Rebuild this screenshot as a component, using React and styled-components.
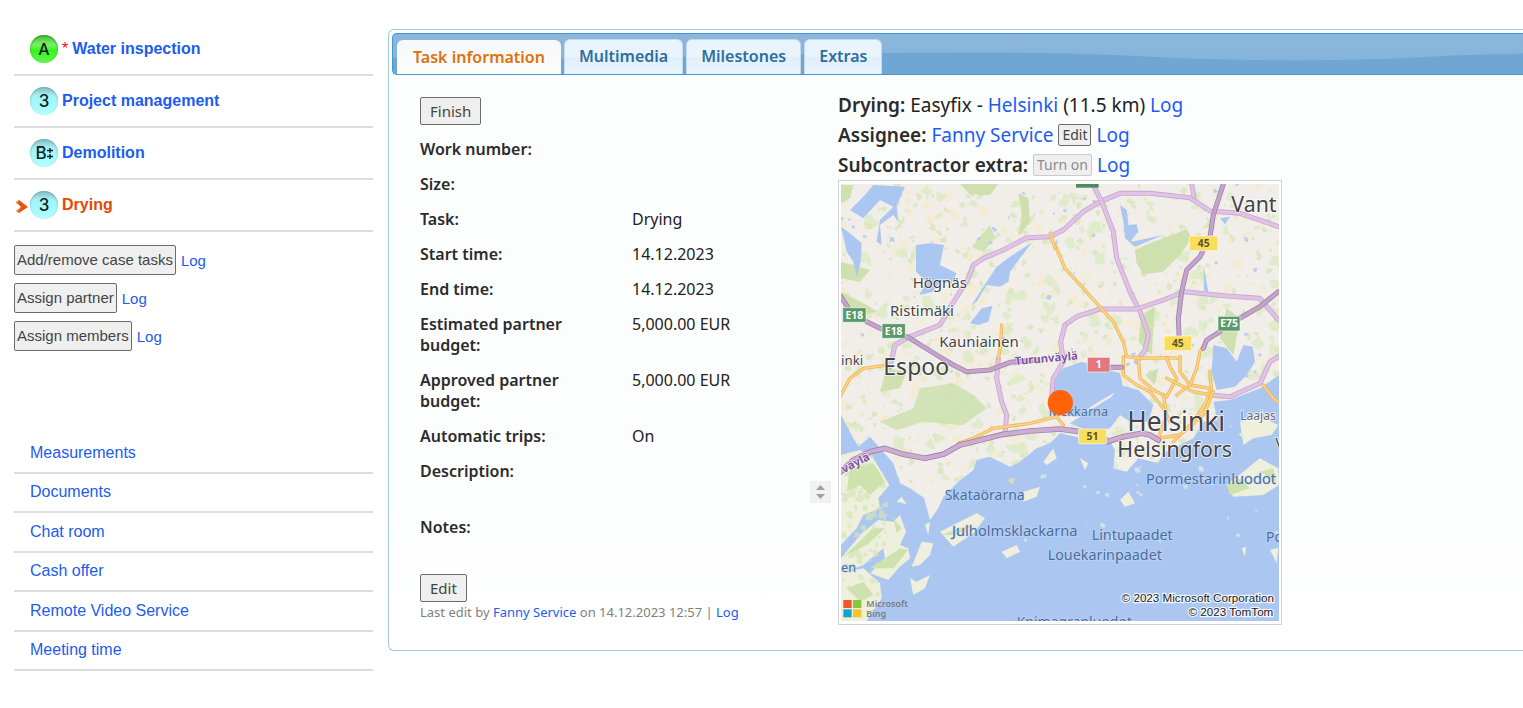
import React from "react";
import styled, { createGlobalStyle, css } from "styled-components";

const sans = '"Liberation Sans", Arial, sans-serif';
const humanist = '"Noto Sans", "Lucida Sans", sans-serif';

const GlobalStyle = createGlobalStyle`
  * { box-sizing: border-box; }
  body {
    margin: 0;
    background: #fff;
    color: #222;
    font-family: ${sans};
    font-size: 16px;
    overflow-x: hidden;
  }
  a { color: #1c5cf0; text-decoration: none; }
  a:hover { text-decoration: underline; }
`;

const Page = styled.div`
  display: flex;
  align-items: flex-start;
  gap: 15px;
  padding: 24px 0 32px 14px;
`;

/* ---------- sidebar ---------- */

const Sidebar = styled.aside`
  flex: 0 0 359px;
`;

const PlainList = styled.ul`
  list-style: none;
  margin: 0;
  padding: 0;
`;

const TaskRow = styled.li`
  display: flex;
  align-items: center;
  height: 52px;
  border-bottom: 2px solid #dcdcdc;
`;

const MarkerSlot = styled.span`
  display: flex;
  flex: 0 0 16px;
  padding: 3px 0 0 1px;
`;

const Badge = styled.span`
  display: flex;
  align-items: center;
  justify-content: center;
  flex: 0 0 28px;
  height: 28px;
  margin-right: 4px;
  border-radius: 50%;
  font: 500 17px/28px Inter, ${sans};
  color: #10221f;
  ${(p) =>
    p.$tone === "green"
      ? css`
          background: linear-gradient(#46bb35 0, #7af268 35%, #35f51c 55%, #62f54c 100%);
          box-shadow: inset 0 1px 2px #329b26;
          font-size: 16px;
        `
      : css`
          background: linear-gradient(#83bdc2 0, #a5eff3 30%, #a1fbff 60%, #b4feff 100%);
          box-shadow: inset 0 1px 2px #78acb0;
        `}
`;

const TaskLink = styled.a`
  font-weight: bold;
  line-height: 20px;
  &[aria-current] { color: #e24a00; }
`;

const Required = styled.span`
  margin-right: 4px;
  color: #f00;
`;

const Actions = styled.div`
  display: flex;
  flex-direction: column;
  gap: 8px;
  padding-top: 13px;
`;

const ActionRow = styled.div`
  display: flex;
  align-items: center;
  gap: 5px;
  font-size: 15px;
`;

const Button = styled.button`
  font-family: ${humanist};
  font-size: 15px;
  line-height: 20px;
  padding: 3px 9px;
  color: #444;
  background: #efefef;
  border: 1px solid #6b6b6b;
  border-radius: 2px;
  &:disabled { color: #8c8c8c; border-color: #cacaca; }
`;

const SideButton = styled(Button)`
  font-family: ${sans};
  height: 30px;
  padding: 0 2px;
`;

const InlineButton = styled(Button)`
  font-size: 14px;
  line-height: 20px;
  padding: 0 3px;
`;

const Menu = styled(PlainList)`
  display: grid;
  grid-auto-rows: 1fr;
  min-height: 237px;
  margin-top: 83px;
`;

const MenuItem = styled.li`
  display: flex;
  align-items: center;
  padding-left: 16px;
  border-bottom: 2px solid #dcdcdc;
`;

/* ---------- tabbed panel ---------- */

const Panel = styled.main`
  flex: 1;
  min-width: 900px;
  margin-top: 5px;
  padding: 3px 0 0 3px;
  border: 1px solid #a6c9e2;
  border-right: 0;
  border-radius: 6px 0 0 6px;
  background: linear-gradient(#fcfdfd 60%, #fff);
  font-family: ${humanist};
`;

const TabBar = styled.div`
  position: relative;
  display: flex;
  align-items: flex-end;
  gap: 3px;
  height: 42px;
  padding-left: 4px;
  overflow: hidden;
  border: 1px solid #4297d7;
  border-right: 0;
  border-radius: 5px 0 0 5px;
  background: linear-gradient(#8bb7dc, #84b2d6);
`;

const Wave = styled.svg`
  position: absolute;
  top: 0;
  left: 0;
`;

const Tab = styled.button`
  position: relative;
  height: 35px;
  padding: 0 14px 2px;
  font: 600 16px/30px ${humanist};
  color: #2e6e9e;
  border: 1px solid #c5dbec;
  border-bottom: 0;
  border-radius: 6px 6px 0 0;
  background: linear-gradient(#eaf4fd 50%, #dfeffc 50%, #eaf4fe);
  &[aria-selected="true"] {
    height: 34px;
    padding: 0 15px 2px;
    color: #e17009;
    border-color: #f7fafb;
    background: linear-gradient(#f5f8f9, #fcfdfd);
  }
`;

const Content = styled.div`
  display: flex;
  gap: 7px;
  padding: 15px 0 25px 28px;
`;

const Details = styled.section`
  flex: 0 0 411px;
  padding-top: 7px;
`;

const Facts = styled.table`
  width: 100%;
  table-layout: fixed;
  border-collapse: collapse;
  margin: 7px 0 8px;
  font-size: 16px;
  line-height: 21px;
`;

const Fact = styled.tr`
  vertical-align: top;
  height: ${(p) => (p.$tall ? 56 : 35)}px;
  th, td { padding: 7px 0; text-align: left; }
  th { width: 212px; padding-right: 60px; font-weight: 600; color: #2b2b2b; }
`;

const TextBox = styled.div`
  display: flex;
  align-items: flex-end;
  height: 42px;
`;

const TextArea = styled.textarea`
  flex: 1;
  height: 22px;
  min-width: 0;
  padding: 0;
  border: 0;
  background: transparent;
  resize: none;
  overflow: hidden;
  font: inherit;
`;

const Scroller = styled.span`
  display: flex;
  flex-direction: column;
  align-items: center;
  justify-content: center;
  width: 21px;
  height: 22px;
  background: #f1f1f1;
`;

const Footnote = styled.p`
  margin: 0;
  font-size: 13px;
  line-height: 20px;
  color: #808080;
`;

const Location = styled.section`
  font-size: 19px;
`;

const Line = styled.div`
  display: flex;
  align-items: center;
  gap: 5px;
  height: 30px;
  white-space: nowrap;
  b { font-weight: 600; color: #2b2b2b; }
`;

const MapFrame = styled.figure`
  margin: 0;
  width: 444px;
  padding: 3px 2px;
  border: 1px solid #d5d5d5;
  background: #fff;
  svg { display: block; width: 100%; height: auto; }
`;

/* ---------- data ---------- */

const tasks = [
  { name: "Water inspection", badge: "A", tone: "green", required: true },
  { name: "Project management", badge: "3" },
  { name: "Demolition", badge: "B" },
  { name: "Drying", badge: "3", current: true },
];

const actions = ["Add/remove case tasks", "Assign partner", "Assign members"];

const menu = ["Measurements", "Documents", "Chat room", "Cash offer", "Remote Video Service", "Meeting time"];

const facts = [
  ["Work number:", ""],
  ["Size:", ""],
  ["Task:", "Drying"],
  ["Start time:", "14.12.2023"],
  ["End time:", "14.12.2023"],
  ["Estimated partner budget:", "5,000.00 EUR"],
  ["Approved partner budget:", "5,000.00 EUR"],
  ["Automatic trips:", "On"],
];

/* ---------- drawings ---------- */

const Marker = () => (
  <svg width="13" height="15" viewBox="0 0 13 15" aria-hidden="true">
    <path d="M1 3l3-2 9 7-9 6-3-2 5-4z" fill="#e85510" />
    <path d="M1 5l2-3M2 13l3-4" stroke="#f79a6c" fill="none" />
  </svg>
);

const DoublePlus = () => (
  <svg width="6" height="13" viewBox="0 0 6 13" aria-hidden="true">
    <path d="M3 1v5M0 3.5h6M3 7v5M0 9.5h6" stroke="#10221f" strokeWidth="1.4" />
  </svg>
);

const Arrow = ({ up }) => (
  <svg width="11" height="8" viewBox="0 0 11 8" aria-hidden="true">
    <path d={up ? "M1 6h9L5.500 1z" : "M1 2h9L5.500 7z"} fill="#a0a0a0" />
  </svg>
);

function blobs(seed, count, box, size) {
  let s = seed;
  const rnd = () => (s = (s * 16807) % 2147483647) / 2147483647;
  let d = "";
  for (let i = 0; i < count; i++) {
    const x = box[0] + rnd() * box[2];
    const y = box[1] + rnd() * box[3];
    const r = size * (0.3 + rnd());
    for (let k = 0; k < 8; k++) {
      const a = (k / 8) * Math.PI * 2;
      const q = r * (0.35 + rnd() * 0.9);
      d += `${k ? "L" : "M"}${Math.round(x + Math.cos(a) * q)} ${Math.round(y + Math.sin(a) * q)}`;
    }
    d += "Z";
  }
  return d;
}

const greens = blobs(77, 260, [33, 27, 1314, 900], 19);
const smallGreens = blobs(5150, 520, [33, 27, 1314, 900], 9);
const creams = blobs(991, 420, [33, 27, 1314, 900], 14);
const ponds = blobs(313, 60, [33, 27, 1314, 600], 7);
const islets = blobs(4242, 30, [560, 840, 790, 260], 9);
const coastGreens = blobs(808, 90, [40, 840, 130, 420], 11);

const Road = ({ d, edge, fill, w }) => (
  <g fill="none" strokeLinejoin="round" strokeLinecap="round">
    <path d={d} stroke={edge} strokeWidth={w} />
    <path d={d} stroke={fill} strokeWidth={w - 5} />
  </g>
);

const minorRoads = [
  "M675 210L705 280L760 340L815 402L850 440L880 500L890 545L930 550L1010 548L1050 550",
  "M660 175L675 220M515 450L512 510L505 550",
  "M33 660L60 610L100 580L160 572",
  "M880 545L880 600L920 630L960 650L1000 700L1020 740",
  "M925 545L930 610L970 645L1010 665L1040 610L1020 575L1010 548",
  "M1050 545L1050 590L1080 630L1140 640L1130 680L1090 740L1030 800",
  "M1040 660L1080 630L1100 580L1110 530L1130 495",
  "M1140 590L1145 660L1090 650L1010 610",
  "M1000 660L1010 720L985 790L1050 780L1120 720L1150 650",
  "M385 805L430 790L490 760L600 745L680 725L700 750",
  "M1300 630L1330 670L1345 680",
];
const motorways = [
  "M235 487L330 450L365 390L415 310L430 270L460 250L520 225L590 188L660 185L700 165L760 110L810 80L870 55L960 55L1080 68L1140 108L1230 115L1345 155",
  "M788 27L815 80L850 170L860 250L900 350L930 410L955 480L945 525L920 560",
  "M235 487L195 510L180 575",
  "M1085 27L1092 65",
  "M705 450L740 425L810 402L920 402L1000 375L1065 350L1190 363L1290 370L1345 435",
  "M705 450L692 500L700 560L670 610L665 660M505 550L500 610L515 680L530 720L525 775",
  "M1140 660L1200 665L1290 625L1320 560L1345 545",
];
const highways = [
  "M110 440L150 460L235 487L320 540L370 570L410 590L480 585L540 562L620 555M830 577H875",
  "M1180 27L1150 120L1140 185L1110 245L1070 285L1055 350L1045 430L1048 500",
  "M1345 350L1290 395L1220 435M1170 470L1130 495L1120 520",
  "M33 365L52 395",
];

const labels = [
  [248, 340, 45, "Högnäs"], [180, 423, 45, "Ristimäki"], [328, 515, 45, "Kauniainen"],
  [160, 600, 69, "Espoo"], [33, 570, 40, "inki"], [1204, 112, 64, "Vant"],
];
const bigLabels = [[892, 768, 79, "Helsinki"], [862, 846, 64, "Helsingfors"]];
const seaLabels = [
  [344, 975, 42, "Skataörarna"], [366, 1083, 44, "Julholmsklackarna"], [785, 1094, 43, "Lintupaadet"],
  [653, 1155, 43, "Louekarinpaadet"], [948, 927, 44, "Pormestarinluodot"], [1308, 1102, 42, "Po"],
  [560, 1356, 42, "Knimagrapluodot"], [33, 1190, 38, "en"],
];

const Sign = ({ x, y, w, fill, color, children }) => (
  <g>
    <rect x={x} y={y} width={w} height="44" rx="2" fill={fill} stroke="#fff" strokeOpacity=".6" strokeWidth="3" />
    <text x={x + w / 2} y={y + 33} textAnchor="middle" fontSize="31" fontWeight="700" fill={color}>
      {children}
    </text>
  </g>
);

const CityMap = () => (
  <svg viewBox="33 27 1314 1311" role="img" aria-label="Map of Espoo and Helsinki" fontFamily='"Noto Sans", sans-serif'>
    <rect x="33" y="27" width="1314" height="1311" fill="#f1eeea" />
    <path d={creams} fill="#f4ebd5" />
    <path d={greens} fill="#dfebca" />
    <path d={smallGreens} fill="#dbe8c2" />
    <g fill="#cde0ae">
      <path d="M915 225L960 205L1070 163L1085 190L1050 240L1000 290L940 298L920 265Z" />
      <path d="M390 27H505L480 60L420 58ZM565 55L595 70L600 140L565 185L575 120ZM33 30L70 30L60 70L33 85Z" />
      <path d="M270 640L370 625L430 660L470 700L400 750L280 740L200 765L150 740L250 700ZM480 150L495 190L460 230L425 215Z" opacity=".85" />
      <path d="M935 420L975 395L965 540L925 500ZM945 600L985 580L975 630ZM1190 400L1230 430L1210 540L1170 490ZM33 260L120 285L90 320L33 310Z" />
      <path d="M170 580L230 590L210 640L150 650ZM33 350L110 390L140 410L60 430Z" />
    </g>
    <g fill="#abc7f1">
      <path d={ponds} opacity=".8" />
      <path d="M258 210L300 205L342 210L330 270L380 295L365 325L330 320L310 350L268 360L290 320L258 290Z" />
      <path d="M605 203L570 250L540 290L535 320L510 335L470 330L440 380L425 390L470 320L500 275L540 245Z" />
      <path d="M455 400L488 392L475 440L445 450L420 445ZM33 155L60 175L95 205L92 260L80 305L70 260L50 230ZM130 30L225 35L200 90L205 140L190 120L150 150L155 210L140 200L150 135L190 95L150 75L100 130L60 105L105 60Z" />
      <path d="M895 150L920 148L925 170L905 195L893 180ZM1170 130L1200 125L1185 148ZM870 90L890 105L895 145L905 200L1000 180L915 215L885 190L880 140Z" />
      <path d="M1150 510L1190 520L1220 560L1240 510L1268 515L1275 560L1250 600L1215 635L1160 645L1145 590ZM1120 270L1135 350L1122 345Z" />
      <path d="M675 610L700 580L755 560L820 580L870 595L880 640L850 655L790 690L740 725L700 720L660 700Z" />
      <path d="M870 630L925 645L970 690L955 740L900 740L870 720L840 760L780 770L720 745L790 700L845 665ZM1150 680L1200 675L1290 640L1347 600V760L1290 750L1220 780L1200 750L1175 760L1160 725Z" />
      <path d="M33 720L62 775L85 815L120 785L150 820L190 865L210 925L240 940L282 968L300 1035L325 1000L340 965L385 920L430 885L440 855L480 845L540 875L570 860L620 820L660 805L690 775L760 790L830 780L855 825L850 880L890 890L925 850L985 865L1000 835L1090 790L1120 740L1180 735L1240 790L1270 760L1347 750V1338H33Z" />
    </g>
    <g fill="#eef0dd">
      <path d="M33 840L90 825L130 850L178 930L145 970L150 1000L100 1020L80 1060L33 1110ZM95 1075L145 1035L190 1040L210 1020L228 1070L210 1110L235 1120L240 1150L205 1180L175 1215L120 1195L165 1150L160 1120L100 1170L33 1195V1150ZM33 1195L100 1180L150 1225L155 1270L110 1338H33Z" />
      <path d="M275 1100L310 1105L300 1140L270 1170L245 1175ZM240 1210L260 1220L300 1200L285 1240L250 1260ZM330 1070L380 1045L440 1015L465 1030L430 1075L370 1115ZM515 1130L560 1110L570 1130L530 1150ZM580 950L630 935L620 965L580 980ZM200 980L215 965L230 988ZM870 975L895 950L915 985L885 995ZM1320 1125L1345 1118L1340 1165ZM1190 930L1290 850L1345 880L1347 930L1300 960L1210 965ZM1230 740L1290 725L1345 750L1325 780L1270 790L1240 810ZM750 850L775 865L765 885Z" />
      <path d={islets} opacity=".6" />
      <path d="M640 860L670 820L680 850L650 870ZM285 1050L300 1040L295 1080ZM1235 1120L1248 1115L1245 1145Z" />
    </g>
    <path d={coastGreens} fill="#d3e4b6" opacity=".7" />
    <g fill="#cfe2ae">
      <path d="M60 880L130 865L165 920L120 960L90 930L50 950ZM120 1180L210 1120L235 1125L190 1180ZM40 1145L130 1060L165 1060L110 1110ZM50 1240L100 1220L130 1260L90 1280ZM190 1030L215 1060L200 1075ZM335 1080L400 1055L430 1050L380 1080ZM1190 930L1230 910L1260 940L1200 960ZM530 915L555 908L548 930ZM1290 890L1330 880L1340 920Z" />
    </g>
    {motorways.map((d) => <Road key={d} d={d} edge="#c8a6d1" fill="#dfc3e4" w={15} />)}
    {minorRoads.map((d) => <Road key={d} d={d} edge="#f0b35e" fill="#fbd780" w={10} />)}
    {highways.map((d) => <Road key={d} d={d} edge="#a283b0" fill="#c4a4c8" w={15} />)}
    <Road d="M33 890L70 855L120 830L165 820L220 838L285 850L340 838L390 810L520 778L600 768L690 762L750 770L830 800L880 785L935 775L960 780L985 795" edge="#a17eb0" fill="#cbadcf" w={17} />
    <g fill="#8053a0" fontSize="34" fontWeight="700" stroke="#fff" strokeOpacity=".7" strokeWidth="4" paintOrder="stroke">
      <text transform="translate(556 570) rotate(-5)">Turunväylä</text>
      <text transform="translate(42 895) rotate(-28)">väylä</text>
    </g>
    <g fill="#454348" stroke="#fff" strokeWidth="5" strokeOpacity=".8" paintOrder="stroke">
      {[...labels, ...bigLabels].map(([x, y, size, t]) => <text key={t} x={x} y={y} fontSize={size}>{t}</text>)}
      <text x="1231" y="736" fontSize="36" fill="#6a6a72">Laajas</text>
      <text x="1336" y="818" fontSize="44">V</text>
    </g>
    <g fill="#496d9c" stroke="#c8daf6" strokeWidth="4" strokeOpacity=".7" paintOrder="stroke">
      {seaLabels.map(([x, y, size, t]) => <text key={t} x={x} y={y} fontSize={size}>{t}</text>)}
      <text x="656" y="723" fontSize="38">Mekkarna</text>
    </g>
    <Sign x={38} y={398} w={70} fill="#5a9a68" color="#fff">E18</Sign>
    <Sign x={156} y={446} w={70} fill="#5a9a68" color="#fff">E18</Sign>
    <Sign x={1164} y={424} w={66} fill="#5a9a68" color="#fff">E75</Sign>
    <rect x="738" y="20" width="68" height="18" fill="#4d8a5c" />
    <Sign x={1078} y={183} w={86} fill="#f9dd5b" color="#5d522b">45</Sign>
    <Sign x={1002} y={483} w={83} fill="#f9dd5b" color="#5d522b">45</Sign>
    <Sign x={746} y={762} w={83} fill="#f9dd5b" color="#5d522b">51</Sign>
    <Sign x={772} y={547} w={68} fill="#e4767d" color="#fff">1</Sign>
    <circle cx="691" cy="683" r="38" fill="#ff6309" />
    <rect x="40" y="1275" width="25" height="24" fill="#f1592a" />
    <rect x="69" y="1275" width="25" height="24" fill="#8bc43f" />
    <rect x="40" y="1303" width="25" height="24" fill="#18a3c8" />
    <rect x="69" y="1303" width="25" height="24" fill="#f7c430" />
    <g fontSize="27" fontWeight="600" fill="#7b7c80">
      <text x="109" y="1297">Microsoft</text>
      <text x="109" y="1327">Bing</text>
    </g>
    <g fontFamily='"Liberation Sans", sans-serif' fontSize="35" textAnchor="end" fill="#222" stroke="#fff" strokeWidth="7" strokeOpacity=".85" paintOrder="stroke">
      <text x="1332" y="1282">© 2023 Microsoft Corporation</text>
      <text x="1330" y="1323">© 2023 TomTom</text>
    </g>
  </svg>
);

/* ---------- page ---------- */

export default function App() {
  return (
    <>
      <GlobalStyle />
      <Page>
        <Sidebar>
          <PlainList>
            {tasks.map((t) => (
              <TaskRow key={t.name}>
                <MarkerSlot>{t.current && <Marker />}</MarkerSlot>
                <Badge $tone={t.tone}>
                  {t.badge}
                  {t.badge === "B" && <DoublePlus />}
                </Badge>
                {t.required && <Required>*</Required>}
                <TaskLink href="#" aria-current={t.current ? "page" : undefined}>{t.name}</TaskLink>
              </TaskRow>
            ))}
          </PlainList>
          <Actions>
            {actions.map((a) => (
              <ActionRow key={a}>
                <SideButton type="button">{a}</SideButton>
                <a href="#">Log</a>
              </ActionRow>
            ))}
          </Actions>
          <Menu>
            {menu.map((m) => (
              <MenuItem key={m}><a href="#">{m}</a></MenuItem>
            ))}
          </Menu>
        </Sidebar>

        <Panel>
          <TabBar role="tablist">
            <Wave width="2000" height="42" viewBox="0 0 2000 42" aria-hidden="true">
              <path d="M0 24C150 28 300 22 430 20C580 18 640 18 720 21C850 28 950 28 1050 22C1130 19 1180 18 1250 20C1400 28 1600 28 2000 20V42H0Z" fill="#6fa6d3" />
            </Wave>
            <Tab type="button" role="tab" aria-selected="true">Task information</Tab>
            <Tab type="button" role="tab" aria-selected="false">Multimedia</Tab>
            <Tab type="button" role="tab" aria-selected="false">Milestones</Tab>
            <Tab type="button" role="tab" aria-selected="false">Extras</Tab>
          </TabBar>

          <Content role="tabpanel">
            <Details>
              <Button type="button">Finish</Button>
              <Facts>
                <tbody>
                  {facts.map(([label, value]) => (
                    <Fact key={label}>
                      <th scope="row">{label}</th>
                      <td>{value}</td>
                    </Fact>
                  ))}
                  <Fact $tall>
                    <th scope="row"><label htmlFor="description">Description:</label></th>
                    <td>
                      <TextBox>
                        <TextArea id="description" readOnly />
                        <Scroller aria-hidden="true"><Arrow up /><Arrow /></Scroller>
                      </TextBox>
                    </td>
                  </Fact>
                  <Fact $tall>
                    <th scope="row">Notes:</th>
                    <td />
                  </Fact>
                </tbody>
              </Facts>
              <Button type="button">Edit</Button>
              <Footnote>
                Last edit by <a href="#">Fanny Service</a> on 14.12.2023 12:57 | <a href="#">Log</a>
              </Footnote>
            </Details>

            <Location>
              <Line>
                <b>Drying:</b>
                <span>Easyfix - <a href="#">Helsinki</a> (11.5 km) <a href="#">Log</a></span>
              </Line>
              <Line>
                <b>Assignee:</b>
                <a href="#">Fanny Service</a>
                <InlineButton type="button">Edit</InlineButton>
                <a href="#">Log</a>
              </Line>
              <Line>
                <b>Subcontractor extra:</b>
                <InlineButton type="button" disabled>Turn on</InlineButton>
                <a href="#">Log</a>
              </Line>
              <MapFrame><CityMap /></MapFrame>
            </Location>
          </Content>
        </Panel>
      </Page>
    </>
  );
}
